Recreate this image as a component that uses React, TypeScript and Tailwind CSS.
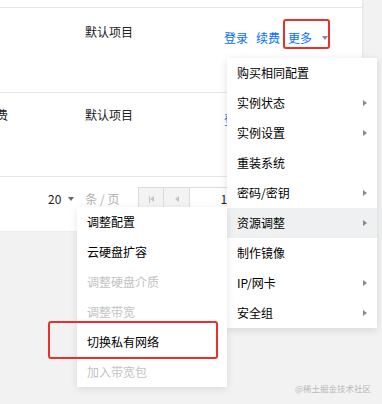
import React from "react";

const font = { fontFamily: '"Noto Sans CJK SC", "Noto Sans", sans-serif' };

function RightArrow() {
  return (
    <span className="w-0 h-0 border-y-[3.5px] border-y-transparent border-l-[4px] border-l-[#8a8a8a]" />
  );
}

function DownArrow({ color = "#8a8a8a" }: { color?: string }) {
  return (
    <span
      className="inline-block w-0 h-0 border-x-[3.5px] border-x-transparent border-t-[4px]"
      style={{ borderTopColor: color }}
    />
  );
}

const mainItems: { label: string; arrow: boolean; active?: boolean }[] = [
  { label: "购买相同配置", arrow: false },
  { label: "实例状态", arrow: true },
  { label: "实例设置", arrow: true },
  { label: "重装系统", arrow: false },
  { label: "密码/密钥", arrow: true },
  { label: "资源调整", arrow: true, active: true },
  { label: "制作镜像", arrow: false },
  { label: "IP/网卡", arrow: true },
  { label: "安全组", arrow: true },
];

const subItems: { label: string; disabled?: boolean }[] = [
  { label: "调整配置" },
  { label: "云硬盘扩容" },
  { label: "调整硬盘介质", disabled: true },
  { label: "调整带宽", disabled: true },
  { label: "切换私有网络" },
  { label: "加入带宽包", disabled: true },
];

export default function App() {
  return (
    <div
      className="relative w-[382px] h-[404px] bg-[#f2f2f2] overflow-hidden text-[12px] leading-[18px] text-[#000]"
      style={font}
    >
      {/* table panel */}
      <div className="w-[362px] h-[231px] bg-white flex flex-col overflow-hidden shadow-[1px_0_2px_rgba(0,0,0,0.06)]">
        <div className="h-[8px] border-b border-[#e6e6e6] shrink-0" />
        {/* row 1 */}
        <div className="h-[85px] border-b border-[#e6e6e6] flex shrink-0">
          <div className="w-[85px]" />
          <div className="w-[139px] pt-[15px] text-[#222]">默认项目</div>
          <div className="pt-[21px] flex items-start text-[#006eff]">
            <span>登录</span>
            <span className="ml-[8px]">续费</span>
            <span className="ml-[8px]">更多</span>
            <span className="ml-[10px] mt-[7px] flex">
              <DownArrow />
            </span>
          </div>
        </div>
        {/* row 2 */}
        <div className="h-[84px] border-b border-[#e6e6e6] flex shrink-0">
          <div className="w-[85px] pt-[13px] text-[#222]">
            <span className="block ml-[-40px] whitespace-nowrap">按量计费</span>
          </div>
          <div className="w-[139px] pt-[13px] text-[#222]">默认项目</div>
          <div className="pt-[18px] flex items-start text-[#006eff]">
            <span>登录</span>
            <span className="ml-[8px]">续费</span>
          </div>
        </div>
        {/* pagination */}
        <div className="pt-[10px] pl-[48px] flex items-center h-[34px] shrink-0">
          <span className="text-[#222]">20</span>
          <span className="ml-[7px] flex">
            <DownArrow color="#666" />
          </span>
          <span className="ml-[11px] text-[#b0b0b0] whitespace-pre">条 / 页</span>
          <div className="ml-[19px] flex h-[24px]">
            <div className="w-[26px] h-[24px] bg-[#f3f3f3] border border-[#dcdcdc] flex items-center justify-center">
              <span className="flex items-center">
                <span className="w-[1.5px] h-[7px] bg-[#c4c4c4]" />
                <span className="w-0 h-0 border-y-[3.5px] border-y-transparent border-r-[4px] border-r-[#c4c4c4]" />
              </span>
            </div>
            <div className="w-[26px] h-[24px] bg-[#f3f3f3] border border-l-0 border-[#dcdcdc] flex items-center justify-center">
              <span className="w-0 h-0 border-y-[3.5px] border-y-transparent border-r-[4px] border-r-[#c4c4c4]" />
            </div>
            <div className="w-[50px] h-[24px] border border-l-0 border-[#dcdcdc] pl-[30px] flex items-center text-[#222]">
              1
            </div>
          </div>
        </div>
      </div>

      {/* red annotation around 更多 */}
      <div className="absolute left-[283px] top-[19px] w-[47px] h-[30px] border-2 border-[#e8312a] rounded-[3px]" />

      {/* main dropdown */}
      <div className="absolute left-[227px] top-[58px] w-[150px] bg-white shadow-[0_2px_8px_rgba(0,0,0,0.12)]">
        {mainItems.map((it) => (
          <div
            key={it.label}
            className={
              "h-[30px] pl-[10px] pr-[10px] flex items-center justify-between " +
              (it.active ? "bg-[#eef0f2]" : "")
            }
          >
            <span>{it.label}</span>
            {it.arrow ? <RightArrow /> : null}
          </div>
        ))}
      </div>

      {/* sub dropdown */}
      <div className="absolute left-[77px] top-[207px] w-[150px] bg-white shadow-[0_2px_8px_rgba(0,0,0,0.1)]">
        {subItems.map((it) => (
          <div
            key={it.label}
            className={
              "h-[30px] pl-[10px] flex items-center " +
              (it.disabled ? "text-[#c3c3c3]" : "text-[#000]")
            }
          >
            {it.label}
          </div>
        ))}
      </div>

      {/* red annotation around 切换私有网络 */}
      <div className="absolute left-[48px] top-[321px] w-[170px] h-[38px] border-2 border-[#e8312a] rounded-[3px]" />

      {/* watermark */}
      <div className="absolute right-[11px] top-[382px] text-[8.5px] leading-[12px] text-[#b8b8b8] whitespace-nowrap">
        @稀土掘金技术社区
      </div>
    </div>
  );
}
